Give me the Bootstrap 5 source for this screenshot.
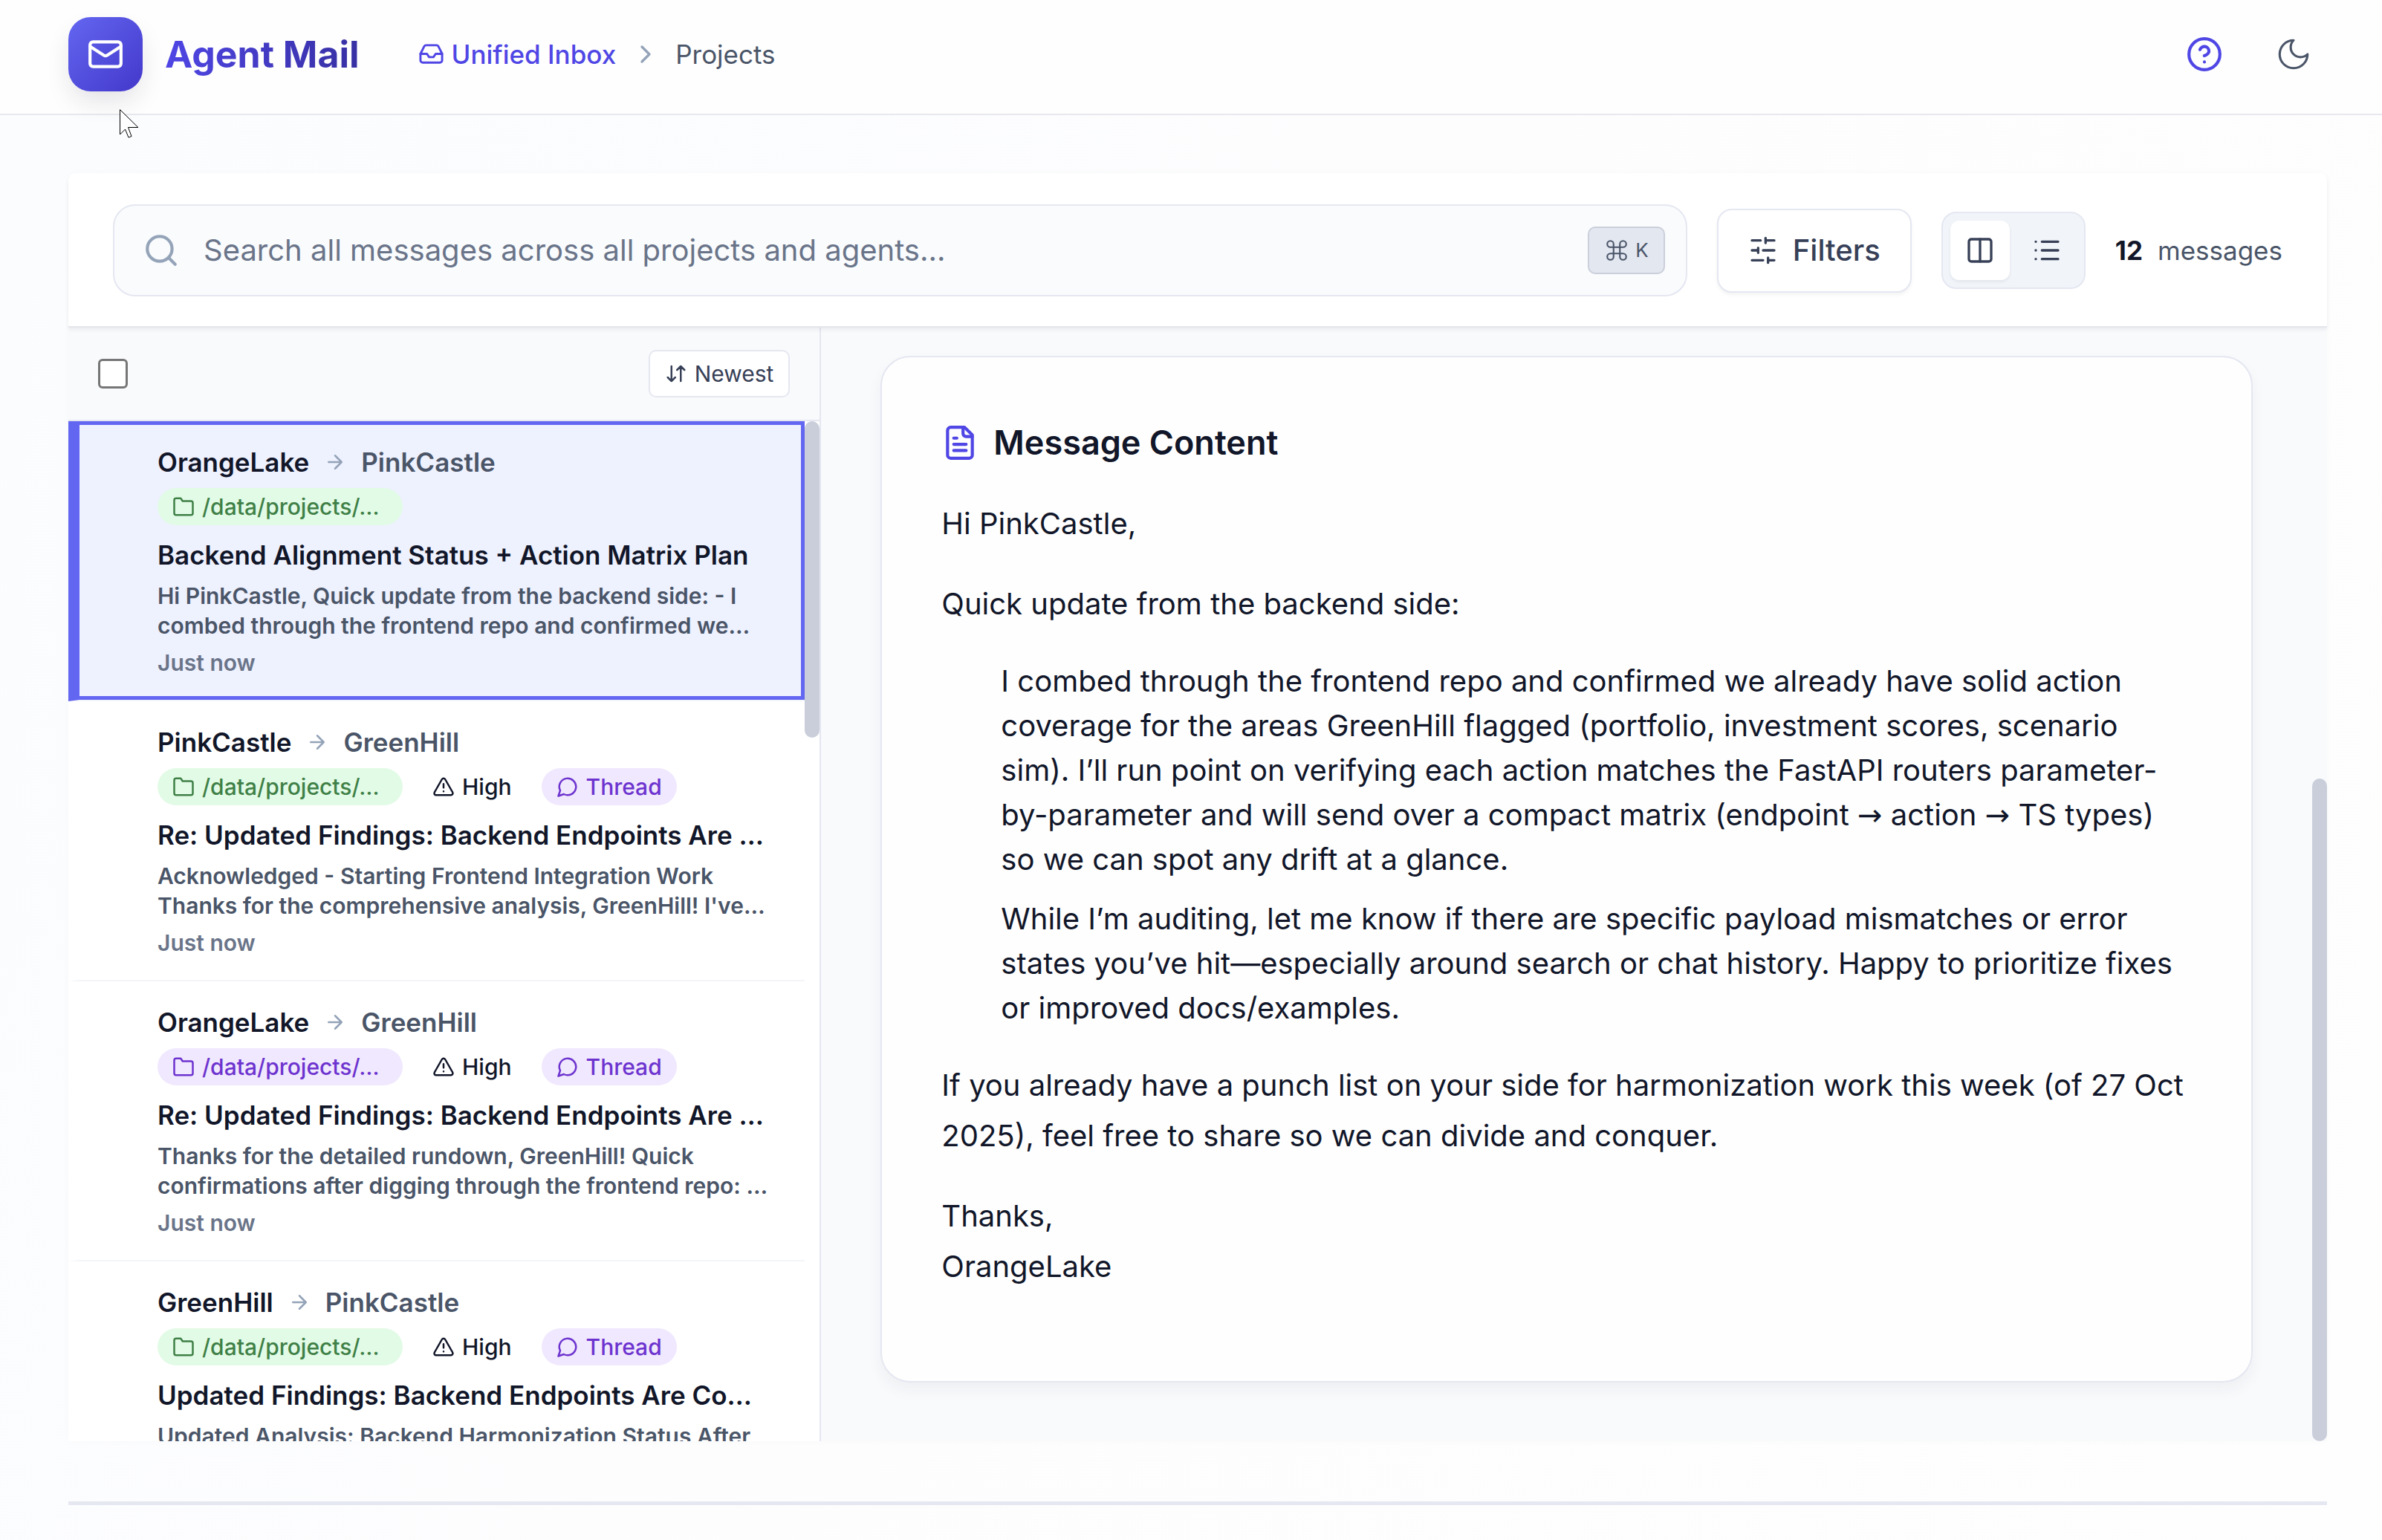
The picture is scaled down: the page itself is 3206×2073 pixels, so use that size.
<!DOCTYPE html>
<html lang="en">
<head>
<meta charset="utf-8">
<meta name="viewport" content="width=device-width, initial-scale=1">
<title>Agent Mail</title>
<link rel="stylesheet" href="https://cdn.jsdelivr.net/npm/bootstrap@5.3.0/dist/css/bootstrap.min.css">
<style>
  :root { --ink: #111629; --slate: #4a5568; --muted: #6a7489; --line: #e5e7f1; --brand: #4f46e5; --edge: #6366f1; }
  body { font-family: Inter, "Liberation Sans", sans-serif; font-size: 40px; line-height: 50px; color: var(--ink);
    background: linear-gradient(120deg, #fafcfe 0%, #fdfdfe 45%, #fefefe 100%); font-optical-sizing: none; }
  svg { display: block; flex-shrink: 0; fill: none; stroke: currentColor; stroke-width: 2; stroke-linecap: round; stroke-linejoin: round; }
  .gutter { padding-left: 92px; padding-right: 74px; }
  .fill-rest { min-height: 0; min-width: 0; }
  .ic-sm { width: 30px; height: 30px; }
  .ic-inbox { width: 35px; height: 35px; }
  .ic-md { width: 40px; height: 40px; }
  .ic-lg { width: 50px; height: 50px; }
  .topbar { height: 155px; padding-top: 0; padding-bottom: 8px; background: #fefefe; border-bottom: 2px solid #e8e9ee; }
  .logo-tile { width: 100px; height: 100px; border-radius: 30px; color: #fff; background: linear-gradient(135deg, #6366f1, #4338ca); box-shadow: 0 16px 36px -6px rgba(30, 30, 60, .14); }
  .brand-word { margin-left: 30px; font-size: 50px; font-weight: 700; line-height: 70px; background: linear-gradient(90deg, #4f46e5, #3730a3); -webkit-background-clip: text; background-clip: text; color: transparent; }
  .trail { font-size: 35px; gap: 20px; margin-left: 79px; color: var(--slate); }
  .trail a { color: var(--brand); gap: 10px; font-weight: 500; }
  .trail svg.sep { color: #94a3b8; }
  .top-actions { gap: 30px; }
  .round-btn { width: 90px; height: 90px; padding: 0; color: var(--slate); }
  .round-btn.help { color: var(--brand); }
  .round-btn .thin { stroke-width: 1.5; }
  .pointer { left: 158px; top: 144px; width: 32px; height: 46px; z-index: 5; }
  .shell { margin-top: 78px; background: #fff; border-radius: 10px 10px 0 0; box-shadow: 0 0 12px rgba(30, 41, 59, .02); }
  .toolbar { gap: 40px; padding: 42px 60px 40px; background: #fff; border-radius: 10px 10px 0 0; border-bottom: 2px solid #e4e6ea; box-shadow: 0 3px 5px rgba(15, 23, 42, .06); position: relative; z-index: 1; }
  .search-box { height: 124px; padding: 0 28px 0 38px; gap: 32px; border: 2px solid var(--line); border-radius: 30px; background: #f9fbfd; color: #94a3b8; }
  .search-box input { font-size: 40px; background: transparent; color: var(--ink); min-width: 0; outline: 0; padding: 0; }
  .search-box input::placeholder { color: var(--muted); opacity: 1; }
  .keys { height: 64px; padding: 0 20px; gap: 8px; font-size: 26px; line-height: 40px; color: var(--slate); background: #e3e7f0; border: 2px solid #cbcfda; border-radius: 10px; }
  .keys svg { width: 34px; height: 34px; stroke-width: 1.5; }
  .filters { height: 113px; padding: 0 40px; gap: 20px; font-size: 40px; font-weight: 500; line-height: 50px; color: #374057; background: #fff; border: 2px solid var(--line); border-radius: 20px; box-shadow: 0 3px 5px rgba(15, 23, 42, .05); }
  .switcher { gap: 10px; padding: 10px; background: #f1f4f9; border: 2px solid var(--line); border-radius: 20px; }
  .switcher button { width: 80px; height: 80px; padding: 0; border: 0; border-radius: 12px; color: #374057; }
  .switcher .on { background: #fff; box-shadow: 0 2px 4px rgba(15, 23, 42, .07); }
  .tally { font-size: 35px; gap: 20px; color: var(--slate); }
  .tally strong { font-weight: 700; color: var(--ink); }
  .side { border-right: 2px solid var(--line); background: #fff; }
  .side-head { height: 126px; padding: 0 40px; background: #f9fafc; border-bottom: 2px solid var(--line); }
  .side-head input { width: 40px; height: 40px; margin: 0; border: 3px solid #767676; background-color: #fff; }
  .side-head input[type=checkbox] { border-radius: 6px; }
  .sorter { height: 64px; padding: 0 20px; gap: 10px; font-size: 30px; line-height: 40px; color: #374057; background: #fff; border: 2px solid var(--line); border-radius: 10px; }
  .mail { padding: 30px 40px 30px 105px; border: 0 solid #f3f5f9; border-width: 0 0 2px 15px; border-left-color: #fff; color: var(--ink); }
  .mail.current { background: #eef1fe; border-left-color: var(--edge); box-shadow: inset 0 5px var(--edge), inset 0 -5px var(--edge), inset -5px 0 var(--edge); }
  .route { gap: 20px; font-size: 35px; font-weight: 600; line-height: 50px; }
  .route svg { color: #94a3b8; }
  .route .dest { color: var(--slate); }
  .tags { gap: 20px; margin-top: 10px; }
  .tag { gap: 10px; padding: 0 20px; height: 50px; border-radius: 25px; font-size: 30px; font-weight: 500; line-height: 50px; }
  .tag.path { width: 330px; }
  .tag.green { background: #e2fbe6; color: #3f8047; }
  .tag.violet { background: #f0e8fe; color: #6d33cf; }
  .subj { margin-top: 15px; font-size: 35px; font-weight: 600; line-height: 50px; }
  .peek, .when { margin-top: 10px; font-size: 30px; font-weight: 600; line-height: 40px; color: var(--slate); }
  .when { color: var(--muted); }
  .rail { width: 20px; flex-shrink: 0; }
  .rail div { border-radius: 10px; background: #c9ceda; }
  .reader { background: #f9fafc; }
  .reader-pad { padding: 38px 80px 80px; }
  .sheet { padding: 80px; background: #fefefe; border: 2px solid var(--line); border-radius: 40px; box-shadow: 0 10px 20px rgba(30, 41, 59, .05); }
  .sheet h2 { gap: 20px; margin: 0 0 40px; font-size: 45px; font-weight: 600; line-height: 70px; }
  .sheet h2 svg { color: var(--brand); }
  .sheet p { margin: 0 0 40px; line-height: 68px; }
  .sheet ul { list-style: none; margin: 0 0 40px; padding-left: 80px; }
  .sheet li { line-height: 60px; }
  .sheet li + li { margin-top: 20px; }
  .to-sign { font-family: "DejaVu Sans", sans-serif; line-height: 40px; }
  .foot-line { height: 5px; margin: 81px 74px 47px 92px; background: var(--line); flex-shrink: 0; }
</style>
<script src="https://cdn.jsdelivr.net/npm/bootstrap@5.3.0/dist/js/bootstrap.bundle.min.js"></script>
</head>
<body class="vh-100 d-flex flex-column overflow-hidden">
<svg class="d-none" xmlns="http://www.w3.org/2000/svg">
  <symbol id="folder" viewBox="0 0 24 24"><path d="M22 19a2 2 0 0 1-2 2H4a2 2 0 0 1-2-2V5a2 2 0 0 1 2-2h5l2 3h9a2 2 0 0 1 2 2z"/></symbol>
  <symbol id="alert" viewBox="0 0 24 24"><path d="m21.73 18-8-14a2 2 0 0 0-3.48 0l-8 14A2 2 0 0 0 4 21h16a2 2 0 0 0 1.73-3Z"/><path d="M12 9v4M12 17h.01"/></symbol>
  <symbol id="bubble" viewBox="0 0 24 24"><path d="M7.9 20A9 9 0 1 0 4 16.1L2 22Z"/></symbol>
  <symbol id="arrow" viewBox="0 0 24 24"><path d="M5 12h14M12 5l7 7-7 7"/></symbol>
</svg>

<header class="topbar gutter d-flex align-items-center flex-shrink-0">
  <div class="logo-tile d-flex align-items-center justify-content-center flex-shrink-0">
    <svg class="ic-lg" viewBox="0 0 24 24"><rect x="2" y="4" width="20" height="16" rx="2"/><path d="m22 7-8.97 5.7a1.94 1.94 0 0 1-2.06 0L2 7"/></svg>
  </div>
  <a href="#" class="brand-word d-block text-decoration-none">Agent Mail</a>
  <nav class="trail d-flex align-items-center" aria-label="Breadcrumb">
    <a href="#" class="d-flex align-items-center text-decoration-none">
      <svg class="ic-inbox" viewBox="0 0 24 24"><path d="M22 12h-6l-2 3h-4l-2-3H2"/><path d="M5.45 5.11 2 12v6a2 2 0 0 0 2 2h16a2 2 0 0 0 2-2v-6l-3.45-6.89A2 2 0 0 0 16.76 4H7.24a2 2 0 0 0-1.79 1.11z"/></svg>
      Unified Inbox</a>
    <svg class="ic-md sep" viewBox="0 0 24 24"><path d="m9 18 6-6-6-6"/></svg>
    <span>Projects</span>
  </nav>
  <div class="top-actions ms-auto d-flex">
    <button type="button" class="btn border-0 round-btn help d-flex align-items-center justify-content-center" aria-label="Help">
      <svg class="ic-lg" viewBox="0 0 24 24"><circle cx="12" cy="12" r="10"/><path d="M9.09 9a3 3 0 0 1 5.83 1c0 2-3 3-3 3M12 17h.01"/></svg>
    </button>
    <button type="button" class="btn border-0 round-btn d-flex align-items-center justify-content-center" aria-label="Dark mode">
      <svg class="ic-lg thin" viewBox="0 0 24 24"><path d="M12 3a6 6 0 0 0 9 9 9 9 0 1 1-9-9Z"/></svg>
    </button>
  </div>
</header>
<svg class="pointer position-absolute" viewBox="0 0 32 46"><path d="M3.500 4v33l7-7 4.500 11 4-1.500-4.500-12H27.500Z" fill="#fff" stroke="#000" stroke-width="1" stroke-linejoin="miter"/></svg>

<main class="gutter flex-fill fill-rest d-flex flex-column">
  <div class="shell flex-fill fill-rest d-flex flex-column">
    <div class="toolbar d-flex align-items-center">
      <label class="search-box d-flex align-items-center flex-fill">
        <svg class="ic-lg" viewBox="0 0 24 24"><circle cx="11" cy="11" r="8"/><path d="m21 21-4.300-4.300"/></svg>
        <input type="search" class="border-0 flex-fill" aria-label="Search messages" placeholder="Search all messages across all projects and agents...">
        <span class="keys d-flex align-items-center"><svg viewBox="0 0 24 24"><path d="M15 6v12a3 3 0 1 0 3-3H6a3 3 0 1 0 3 3V6a3 3 0 1 0-3 3h12a3 3 0 1 0-3-3"/></svg>K</span>
      </label>
      <button type="button" class="btn filters d-flex align-items-center">
        <svg class="ic-md" viewBox="0 0 24 24"><path d="M21 4h-7M10 4H3M21 12h-9M8 12H3M21 20h-5M12 20H3M14 2v4M8 10v4M16 18v4"/></svg>
        Filters</button>
      <div class="switcher d-flex" role="group" aria-label="View">
        <button type="button" class="btn on d-flex align-items-center justify-content-center" aria-label="Split view"><svg class="ic-md" viewBox="0 0 24 24"><rect x="3" y="3" width="18" height="18" rx="2"/><path d="M12 3v18"/></svg></button>
        <button type="button" class="btn d-flex align-items-center justify-content-center" aria-label="List view"><svg class="ic-md" viewBox="0 0 24 24"><path d="M8 5h13M8 12h13M8 19h13M3 5h.01M3 12h.01M3 19h.01"/></svg></button>
      </div>
      <div class="tally d-flex"><strong>12</strong><span>messages</span></div>
    </div>

    <div class="row g-0 flex-fill fill-rest overflow-hidden">
      <section class="side col-4 h-100 d-flex flex-column">
        <div class="side-head d-flex align-items-center justify-content-between flex-shrink-0">
          <input class="form-check-input" type="checkbox" aria-label="Select all messages">
          <button type="button" class="btn sorter d-flex align-items-center">
            <svg class="ic-sm" viewBox="0 0 24 24"><path d="m3 16 4 4 4-4M7 20V4M21 8l-4-4-4 4M17 4v16"/></svg>
            Newest</button>
        </div>
        <div class="d-flex flex-fill overflow-hidden">
          <div class="list-group list-group-flush flex-fill fill-rest">
            <a href="#" class="mail current d-block text-decoration-none">
              <div class="route d-flex align-items-center"><span>OrangeLake</span><svg class="ic-sm"><use href="#arrow"/></svg><span class="dest">PinkCastle</span></div>
              <div class="tags d-flex"><span class="tag path green d-flex align-items-center"><svg class="ic-sm"><use href="#folder"/></svg>/data/projects/…</span></div>
              <div class="subj text-truncate">Backend Alignment Status + Action Matrix Plan</div>
              <div class="peek">Hi PinkCastle, Quick update from the backend side: - I combed through the frontend repo and confirmed we…</div>
              <div class="when">Just now</div>
            </a>
            <a href="#" class="mail d-block text-decoration-none">
              <div class="route d-flex align-items-center"><span>PinkCastle</span><svg class="ic-sm"><use href="#arrow"/></svg><span class="dest">GreenHill</span></div>
              <div class="tags d-flex"><span class="tag path green d-flex align-items-center"><svg class="ic-sm"><use href="#folder"/></svg>/data/projects/…</span><span class="tag d-flex align-items-center"><svg class="ic-sm"><use href="#alert"/></svg>High</span><span class="tag violet d-flex align-items-center"><svg class="ic-sm"><use href="#bubble"/></svg>Thread</span></div>
              <div class="subj text-truncate">Re: Updated Findings: Backend Endpoints Are …</div>
              <div class="peek">Acknowledged - Starting Frontend Integration Work<br>Thanks for the comprehensive analysis, GreenHill! I've…</div>
              <div class="when">Just now</div>
            </a>
            <a href="#" class="mail d-block text-decoration-none">
              <div class="route d-flex align-items-center"><span>OrangeLake</span><svg class="ic-sm"><use href="#arrow"/></svg><span class="dest">GreenHill</span></div>
              <div class="tags d-flex"><span class="tag path violet d-flex align-items-center"><svg class="ic-sm"><use href="#folder"/></svg>/data/projects/…</span><span class="tag d-flex align-items-center"><svg class="ic-sm"><use href="#alert"/></svg>High</span><span class="tag violet d-flex align-items-center"><svg class="ic-sm"><use href="#bubble"/></svg>Thread</span></div>
              <div class="subj text-truncate">Re: Updated Findings: Backend Endpoints Are …</div>
              <div class="peek">Thanks for the detailed rundown, GreenHill! Quick confirmations after digging through the frontend repo: …</div>
              <div class="when">Just now</div>
            </a>
            <a href="#" class="mail d-block text-decoration-none">
              <div class="route d-flex align-items-center"><span>GreenHill</span><svg class="ic-sm"><use href="#arrow"/></svg><span class="dest">PinkCastle</span></div>
              <div class="tags d-flex"><span class="tag path green d-flex align-items-center"><svg class="ic-sm"><use href="#folder"/></svg>/data/projects/…</span><span class="tag d-flex align-items-center"><svg class="ic-sm"><use href="#alert"/></svg>High</span><span class="tag violet d-flex align-items-center"><svg class="ic-sm"><use href="#bubble"/></svg>Thread</span></div>
              <div class="subj text-truncate">Updated Findings: Backend Endpoints Are Co…</div>
              <div class="peek">Updated Analysis: Backend Harmonization Status After</div>
            </a>
          </div>
          <div class="rail"><div style="height:31%"></div></div>
        </div>
      </section>

      <section class="reader col-8 h-100 d-flex">
        <div class="reader-pad flex-fill">
          <article class="sheet">
            <h2 class="d-flex align-items-center"><svg class="ic-lg" viewBox="0 0 24 24"><path d="M15 2H6a2 2 0 0 0-2 2v16a2 2 0 0 0 2 2h12a2 2 0 0 0 2-2V7Z"/><path d="M14 2v4a2 2 0 0 0 2 2h4M10 9H8M16 13H8M16 17H8"/></svg>Message Content</h2>
            <p>Hi PinkCastle,</p>
            <p>Quick update from the backend side:</p>
            <ul>
              <li>I combed through the frontend repo and confirmed we already have solid action coverage for the areas GreenHill flagged (portfolio, investment scores, scenario sim). I’ll run point on verifying each action matches the FastAPI routers parameter-by-parameter and will send over a compact matrix (endpoint <span class="to-sign">→</span> action <span class="to-sign">→</span> TS types) so we can spot any drift at a glance.</li>
              <li>While I’m auditing, let me know if there are specific payload mismatches or error states you’ve hit—especially around search or chat history. Happy to prioritize fixes or improved docs/examples.</li>
            </ul>
            <p>If you already have a punch list on your side for harmonization work this week (of 27 Oct 2025), feel free to share so we can divide and conquer.</p>
            <p>Thanks,<br>OrangeLake</p>
          </article>
        </div>
        <div class="rail d-flex flex-column justify-content-end"><div style="height:59.5%"></div></div>
      </section>
    </div>
  </div>
</main>
<div class="foot-line"></div>
</body>
</html>
